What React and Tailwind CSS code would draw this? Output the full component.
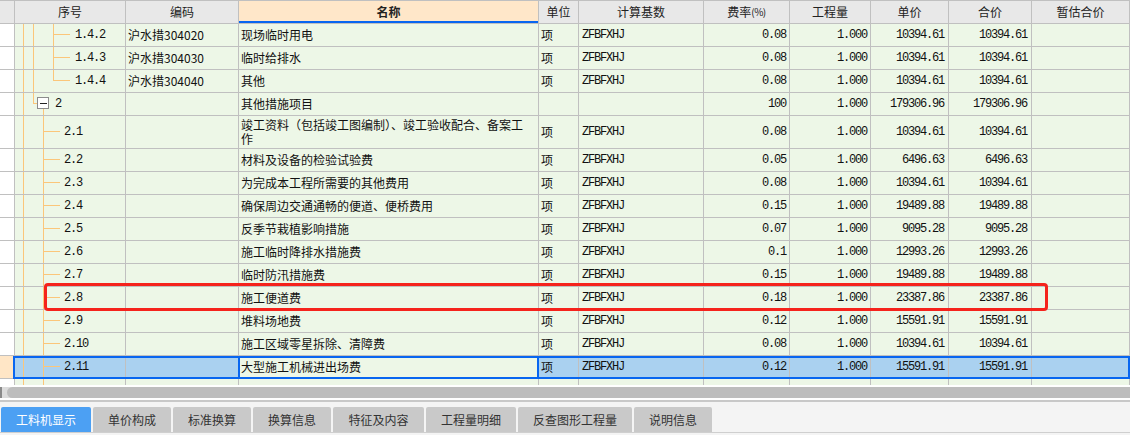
import React from 'react';

const COLS = 'grid grid-cols-[15px_111px_113px_300px_40px_125px_86px_81px_78px_83px_98px]';
const CELL = 'border-r border-b border-[#c0c0c0] flex items-center overflow-hidden';
const CJK = "font-['Noto_Sans_CJK_SC','Noto_Sans',sans-serif] text-[12px] leading-[14px] text-[#111]";
const MONO = "font-['Liberation_Mono',monospace] text-[12px] tracking-[-1.2px] text-[#111]";

const rows = [
  { tree: 'a', no: '1.4.2', code: '沪水措304020', name: '现场临时用电', unit: '项', base: 'ZFBFXHJ', rate: '0.08', qty: '1.000', price: '10394.61', total: '10394.61' },
  { tree: 'a', no: '1.4.3', code: '沪水措304030', name: '临时给排水', unit: '项', base: 'ZFBFXHJ', rate: '0.08', qty: '1.000', price: '10394.61', total: '10394.61' },
  { tree: 'aEnd', no: '1.4.4', code: '沪水措304040', name: '其他', unit: '项', base: 'ZFBFXHJ', rate: '0.08', qty: '1.000', price: '10394.61', total: '10394.61' },
  { tree: 'g', no: '2', code: '', name: '其他措施项目', unit: '', base: '', rate: '100', qty: '1.000', price: '179306.96', total: '179306.96' },
  { tree: 'b', tall: true, no: '2.1', code: '', name: '竣工资料（包括竣工图编制）、竣工验收配合、备案工作', unit: '项', base: 'ZFBFXHJ', rate: '0.08', qty: '1.000', price: '10394.61', total: '10394.61' },
  { tree: 'b', no: '2.2', code: '', name: '材料及设备的检验试验费', unit: '项', base: 'ZFBFXHJ', rate: '0.05', qty: '1.000', price: '6496.63', total: '6496.63' },
  { tree: 'b', no: '2.3', code: '', name: '为完成本工程所需要的其他费用', unit: '项', base: 'ZFBFXHJ', rate: '0.08', qty: '1.000', price: '10394.61', total: '10394.61' },
  { tree: 'b', no: '2.4', code: '', name: '确保周边交通通畅的便道、便桥费用', unit: '项', base: 'ZFBFXHJ', rate: '0.15', qty: '1.000', price: '19489.88', total: '19489.88' },
  { tree: 'b', no: '2.5', code: '', name: '反季节栽植影响措施', unit: '项', base: 'ZFBFXHJ', rate: '0.07', qty: '1.000', price: '9095.28', total: '9095.28' },
  { tree: 'b', no: '2.6', code: '', name: '施工临时降排水措施费', unit: '项', base: 'ZFBFXHJ', rate: '0.1', qty: '1.000', price: '12993.26', total: '12993.26' },
  { tree: 'b', no: '2.7', code: '', name: '临时防汛措施费', unit: '项', base: 'ZFBFXHJ', rate: '0.15', qty: '1.000', price: '19489.88', total: '19489.88' },
  { tree: 'b', no: '2.8', code: '', name: '施工便道费', unit: '项', base: 'ZFBFXHJ', rate: '0.18', qty: '1.000', price: '23387.86', total: '23387.86' },
  { tree: 'b', no: '2.9', code: '', name: '堆料场地费', unit: '项', base: 'ZFBFXHJ', rate: '0.12', qty: '1.000', price: '15591.91', total: '15591.91' },
  { tree: 'b', no: '2.10', code: '', name: '施工区域零星拆除、清障费', unit: '项', base: 'ZFBFXHJ', rate: '0.08', qty: '1.000', price: '10394.61', total: '10394.61' },
  { tree: 'b', selected: true, no: '2.11', code: '', name: '大型施工机械进出场费', unit: '项', base: 'ZFBFXHJ', rate: '0.12', qty: '1.000', price: '15591.91', total: '15591.91' },
  { tree: 'p', tall: true, no: '2.12', code: '', name: '海工区域中的船舶、航道航标设施运转及拆除费', unit: '项', base: 'ZFBFXHJ', rate: '0.08', qty: '1.000', price: '10394.61', total: '10394.61' },
];

const tabs = [
  { label: '工料机显示', w: 'w-[90px]', active: true },
  { label: '单价构成', w: 'w-[78px]' },
  { label: '标准换算', w: 'w-[78px]' },
  { label: '换算信息', w: 'w-[78px]' },
  { label: '特征及内容', w: 'w-[91px]' },
  { label: '工程量明细', w: 'w-[90px]' },
  { label: '反查图形工程量', w: 'w-[114px]' },
  { label: '说明信息', w: 'w-[78px]' },
];

// orange tree connectors in the 序号 column
function Tree({ type, h }) {
  const c = '#fbc67a';
  const mid = h > 25 ? 15.5 : 10.5;
  return (
    <svg className="absolute left-0 top-0" width="110" height={h} shapeRendering="crispEdges">
      <line x1="8.5" y1="0" x2="8.5" y2={h} stroke={c} />
      {(type === 'a' || type === 'aEnd') && (
        <>
          <line x1="18.5" y1="0" x2="18.5" y2={h} stroke={c} />
          <line x1="38.5" y1="0" x2="38.5" y2={type === 'aEnd' ? mid : h} stroke={c} />
          <line x1="38.5" y1={mid} x2="55" y2={mid} stroke={c} />
        </>
      )}
      {type === 'g' && (
        <>
          <line x1="18.5" y1="0" x2="18.5" y2={mid} stroke={c} />
          <line x1="18.5" y1={mid} x2="22" y2={mid} stroke={c} />
          <line x1="28.5" y1="16" x2="28.5" y2={h} stroke={c} />
          <rect x="22.5" y="4.5" width="11" height="11" fill="#fff" stroke="#8c8c8c" />
          <line x1="25" y1="10.5" x2="32" y2="10.5" stroke="#222" />
        </>
      )}
      {(type === 'b' || type === 'p') && <line x1="28.5" y1="0" x2="28.5" y2={h} stroke={c} />}
      {type === 'b' && <line x1="28.5" y1={mid} x2="45" y2={mid} stroke={c} />}
    </svg>
  );
}

function Row({ r }) {
  const bg = r.selected ? 'bg-[#aad1f0]' : 'bg-[#edf7e7]';
  const pad = r.tree === 'g' ? 'pl-[40px]' : r.tree === 'b' || r.tree === 'p' ? 'pl-[49px]' : 'pl-[60px]';
  return (
    <div className={`relative ${COLS} ${r.tall ? 'h-[33px]' : 'h-[23px]'}`}>
      <div className={`${CELL} ${r.selected ? 'bg-[#ffe6c6]' : 'bg-white'}`} />
      <div className={`${CELL} relative ${bg} ${pad}`}>
        <Tree type={r.tree} h={r.tall ? 32 : 22} />
        <span className={`relative ${MONO}`}>{r.no}</span>
      </div>
      <div className={`${CELL} ${bg} pl-[2px] ${CJK}`}>{r.code}</div>
      <div className={`${CELL} bg-[#edf7e7] pl-[2px] pr-[4px] ${CJK}`}>
        <span className="break-all">{r.name}</span>
      </div>
      <div className={`${CELL} ${bg} pl-[2px] ${CJK}`}>{r.unit}</div>
      <div className={`${CELL} ${bg} pl-[3px] ${MONO}`}>{r.base}</div>
      <div className={`${CELL} ${bg} justify-end pr-[3px] ${MONO}`}>{r.rate}</div>
      <div className={`${CELL} ${bg} justify-end pr-[3px] ${MONO}`}>{r.qty}</div>
      <div className={`${CELL} ${bg} justify-end pr-[4px] ${MONO}`}>{r.price}</div>
      <div className={`${CELL} ${bg} justify-end pr-[4px] ${MONO}`}>{r.total}</div>
      <div className={`${CELL} ${bg}`} />
      {r.selected && (
        <>
          <div className="absolute left-[13px] top-0 w-[1117px] h-[23px] border-2 border-[#0866f0]" />
          <div className="absolute left-[238px] top-0 w-[301px] h-[23px] border-x-2 border-[#0866f0]" />
        </>
      )}
    </div>
  );
}

function Header() {
  const h = `${CELL} border-t justify-center bg-[#e8e8e8] ${CJK} text-[#222]`;
  return (
    <div className={`${COLS} h-[24px]`}>
      <div className={h} />
      <div className={h}>序号</div>
      <div className={h}>编码</div>
      <div className={`${CELL} border-t justify-center bg-[#ffe7c9] ${CJK} font-bold text-[#222] relative`}>
        名称
        <div className="absolute left-0 right-0 bottom-0 h-[2px] bg-[#0866f0]" />
      </div>
      <div className={h}>单位</div>
      <div className={h}>计算基数</div>
      <div className={h}>
        费率<span className="text-[10px] tracking-[-0.5px]">(%)</span>
      </div>
      <div className={h}>工程量</div>
      <div className={h}>单价</div>
      <div className={h}>合价</div>
      <div className={h}>暂估合价</div>
    </div>
  );
}

export default function App() {
  return (
    <div className="w-[1130px] h-[435px] flex flex-col bg-white overflow-hidden">
      <div className="relative h-[385px] shrink-0 overflow-hidden">
        <Header />
        {rows.map((r) => (
          <Row key={r.no} r={r} />
        ))}
        {/* red annotation box */}
        <div className="absolute left-[44px] top-[283px] w-[1004px] h-[28px] border-[3px] border-[#f5231c] rounded-[4px]" />
      </div>

      {/* horizontal scrollbar */}
      <div className="h-[2px] shrink-0 bg-white" />
      <div className="h-[11px] shrink-0 flex bg-[#dcdcdc]">
        <div className="w-[2px] bg-[#8a8a8a]" />
        <div className="w-[5px]" />
        <div className="flex-1 rounded-l-full bg-[#bdbdbd]" />
      </div>
      <div className="h-[2px] shrink-0 bg-white" />
      <div className="h-[2px] shrink-0 bg-[#c8c8c8]" />

      {/* bottom tabs */}
      <div className="flex-1 bg-[#f4f4f4] pt-[5px]">
        <div className="h-[26px] flex gap-[2px] pl-[1px] border-b border-[#cfcfcf]">
          {tabs.map((t) => (
            <div
              key={t.label}
              className={`${t.w} h-[25px] flex items-center justify-center rounded-t-[2px] font-['Noto_Sans_CJK_SC',sans-serif] text-[12px] ${
                t.active ? 'bg-[#4ca0f3] text-white' : 'bg-[#c9c9c9] text-[#333]'
              }`}
            >
              {t.label}
            </div>
          ))}
        </div>
      </div>
    </div>
  );
}
